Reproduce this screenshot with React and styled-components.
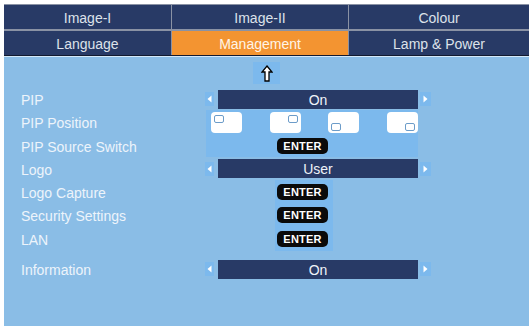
import React from 'react';
import styled, { createGlobalStyle } from 'styled-components';

const GlobalStyle = createGlobalStyle`
body {
  margin: 0;
  background: #ffffff;
  font-family: "Liberation Sans", Arial, sans-serif;
}
`;

const Panel = styled.div`
margin: 4px 1px 0 4px;
height: 322px;
display: flex;
flex-direction: column;
background: #8abde6;
`;

const TabGrid = styled.div`
display: grid;
grid-template-columns: 167px 176px 1fr;
column-gap: 1px;
row-gap: 2px;
background: #8a92a4;
padding-top: 1px;
border-bottom: 1px solid #121a30;
box-shadow: 0 1px 0 #d4e8f8;
`;

const Tab = styled.div`
height: 24px;
display: flex;
align-items: center;
justify-content: center;
padding-top: 1px;
box-sizing: border-box;
background: ${p => (p.$active ? '#f39431' : '#283a66')};
color: ${p => (p.$active ? '#fff4e8' : '#dde2ea')};
font-size: 14px;
`;

const Content = styled.div`
flex: 1;
padding-top: 6px;
`;

const ArrowRow = styled.div`
display: flex;
justify-content: center;
margin-bottom: 4px;
`;

const ArrowBox = styled.div`
width: 27px;
height: 22px;
background: #7cb9ed;
display: flex;
align-items: center;
justify-content: center;
`;

const Rows = styled.div`
padding-left: 17px;
`;

const Row = styled.div`
display: flex;
align-items: center;
height: ${p => p.$h}px;
margin-top: ${p => p.$gap || 0}px;
`;

const Label = styled.div`
width: 184px;
flex-shrink: 0;
padding-top: 2px;
color: #edf4fb;
font-size: 14px;
`;

const Selector = styled.div`
display: flex;
align-items: center;
`;

const SideBtn = styled.div`
width: ${p => p.$w}px;
height: 14px;
background: #7cb9ed;
display: flex;
align-items: center;
justify-content: center;
margin-left: ${p => p.$ml || 0}px;
`;

const Bar = styled.div`
width: 200px;
height: 19px;
margin-left: 4px;
padding-top: 1px;
box-sizing: border-box;
background: #283a66;
color: #eef2f8;
font-size: 14px;
display: flex;
align-items: center;
justify-content: center;
`;

const TintCell = styled.div`
align-self: stretch;
margin-left: ${p => p.$ml}px;
width: ${p => p.$w}px;
background: #7cb9ed;
display: flex;
align-items: ${p => (p.$top ? 'flex-start' : 'center')};
padding-left: ${p => p.$pl}px;
padding-top: ${p => (p.$top ? 2 : 0)}px;
gap: 27.5px;
box-sizing: border-box;
`;

const Screen = styled.div`
position: relative;
width: 31px;
height: 21px;
background: #ffffff;
border-radius: 4px;
flex-shrink: 0;
`;

const Marker = styled.div`
position: absolute;
width: 8px;
height: 6px;
border: 1.5px solid #6c9cc9;
border-radius: 2px;
background: #ffffff;
${p => (p.$pos.includes('t') ? 'top: 3px;' : 'bottom: 2px;')}
${p => (p.$pos.includes('l') ? 'left: 3px;' : 'right: 3px;')}
`;

const Enter = styled.div`
width: 51px;
height: 16px;
border-radius: 5px;
background: #0a0a0a;
color: #ffffff;
font-family: "Liberation Sans", Arial, sans-serif;
font-weight: bold;
font-size: 11px;
letter-spacing: 0.2px;
display: flex;
align-items: center;
justify-content: center;
`;

const Tri = ({ dir }) => (
  <svg width="5" height="8" viewBox="0 0 5 8">
    <polygon points={dir === 'left' ? '4.5,0.5 4.5,7.5 0.5,4' : '0.5,0.5 0.5,7.5 4.5,4'} fill="#ffffff" />
  </svg>
);

const Choice = ({ value }) => (
  <Selector>
    <SideBtn $w={9}><Tri dir="left" /></SideBtn>
    <Bar>{value}</Bar>
    <SideBtn $w={11} $ml={2}><Tri dir="right" /></SideBtn>
  </Selector>
);

const tabs = [
  ['Image-I', 'Image-II', 'Colour'],
  ['Language', 'Management', 'Lamp & Power'],
];

const positions = ['tl', 'tr', 'bl', 'br'];

const App = () => (
  <>
    <GlobalStyle />
    <Panel>
      <TabGrid>
        {tabs.flat().map(t => (
          <Tab key={t} $active={t === 'Management'}>{t}</Tab>
        ))}
      </TabGrid>
      <Content>
        <ArrowRow>
          <ArrowBox>
            <svg width="12" height="17" viewBox="0 0 12 17">
              <polygon points="6,1 11,7 8,7 8,16 4,16 4,7 1,7" fill="#ffffff" stroke="#000000" strokeWidth="1.3" strokeLinejoin="miter" />
            </svg>
          </ArrowBox>
        </ArrowRow>
        <Rows>
          <Row $h={22}>
            <Label>PIP</Label>
            <Choice value="On" />
          </Row>
          <Row $h={24}>
            <Label>PIP Position</Label>
            <TintCell $ml={1} $w={212} $pl={5} $top>
              {positions.map(p => (
                <Screen key={p}><Marker $pos={p} /></Screen>
              ))}
            </TintCell>
          </Row>
          <Row $h={23}>
            <Label>PIP Source Switch</Label>
            <TintCell $ml={1} $w={212} $pl={71}>
              <Enter>ENTER</Enter>
            </TintCell>
          </Row>
          <Row $h={23}>
            <Label>Logo</Label>
            <Choice value="User" />
          </Row>
          <Row $h={23}>
            <Label>Logo Capture</Label>
            <TintCell $ml={70} $w={58} $pl={2}>
              <Enter>ENTER</Enter>
            </TintCell>
          </Row>
          <Row $h={24}>
            <Label>Security Settings</Label>
            <TintCell $ml={70} $w={58} $pl={2}>
              <Enter>ENTER</Enter>
            </TintCell>
          </Row>
          <Row $h={24}>
            <Label>LAN</Label>
            <TintCell $ml={70} $w={58} $pl={2}>
              <Enter>ENTER</Enter>
            </TintCell>
          </Row>
          <Row $h={22} $gap={7}>
            <Label>Information</Label>
            <Choice value="On" />
          </Row>
        </Rows>
      </Content>
    </Panel>
  </>
);

export default App;
